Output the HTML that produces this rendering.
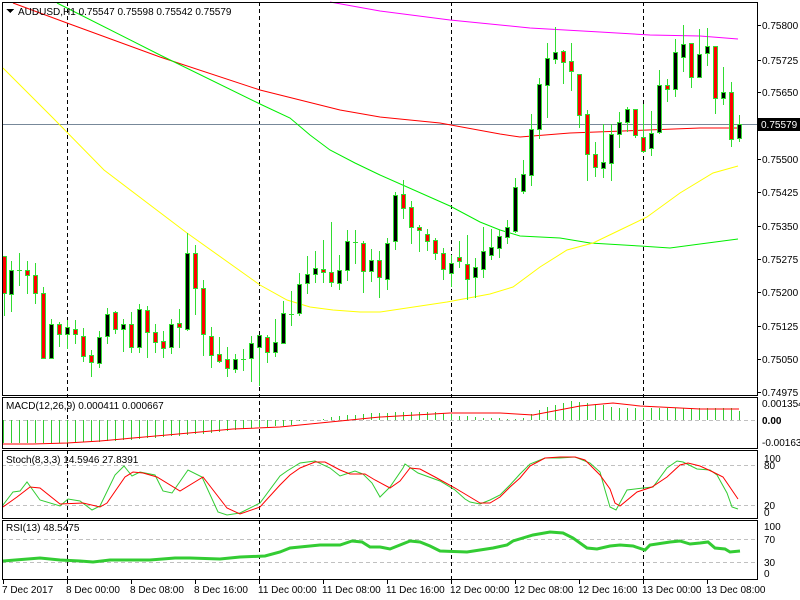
<!DOCTYPE html>
<html><head><meta charset="utf-8"><style>
html,body{margin:0;padding:0;background:#fff;width:800px;height:600px;overflow:hidden}
svg{display:block;font-family:"Liberation Sans",sans-serif;font-size:10px}
</style></head><body>
<svg id="s" width="800" height="600" xmlns="http://www.w3.org/2000/svg" shape-rendering="crispEdges"></svg>
<script>
var S=document.getElementById('s'),h='';
function L(x1,y1,x2,y2,c,w,d){h+='<line x1="'+x1+'" y1="'+y1+'" x2="'+x2+'" y2="'+y2+'" stroke="'+c+'" stroke-width="'+(w||1)+'"'+(d?' stroke-dasharray="'+d+'"':'')+'/>';}
function R(x,y,w,hh,f){h+='<rect x="'+x+'" y="'+y+'" width="'+w+'" height="'+hh+'" fill="'+f+'"/>';}
function T(x,y,t,a,b){h+='<text x="'+x+'" y="'+y+'"'+(a?' text-anchor="'+a+'"':'')+(b?' font-weight="bold"':'')+'>'+t+'</text>';}
function P(pts,c,w){h+='<polyline fill="none" stroke="'+c+'" stroke-width="'+(w||1)+'" shape-rendering="auto" points="'+pts.map(function(p){return p.join(',')}).join(' ')+'"/>';}
function interp(pts,x){for(var i=0;i<pts.length-1;i++){if(x>=pts[i][0]&&x<=pts[i+1][0]){var t=(x-pts[i][0])/(pts[i+1][0]-pts[i][0]);return pts[i][1]+t*(pts[i+1][1]-pts[i][1]);}}return pts[pts.length-1][1];}
var G='#32dd32',GR='#c0c0c0';
L(2,420.5,757,420.5,GR,1,'4,3');
L(2,465.5,757,465.5,GR,1,'4,3');L(2,505.5,757,505.5,GR,1,'4,3');
L(2,539.5,757,539.5,GR,1,'4,3');L(2,562.5,757,562.5,GR,1,'4,3');
[67,259,451,643].forEach(function(x){L(x+.5,2,x+.5,580,'#000',1,'4,3');});
L(2,124.5,757,124.5,'#778899');
P([[330,2],[380,11],[450,20],[530,28],[600,32],[650,35],[700,36],[738,39]],'#ff00ff');
P([[13,3],[67,23],[160,57],[260,90],[300,100],[340,110],[380,117],[440,123],[500,134],[520,137],[570,133],[700,128],[738,128]],'#ff0000');
P([[57,3],[160,55],[260,104],[290,118],[310,135],[330,150],[355,163],[380,175],[450,206],[480,222],[500,230],[520,236],[560,238],[590,243],[640,246],[670,248],[700,244],[738,239]],'#00ee00');
P([[3,68],[53,118],[104,170],[187,233],[260,285],[287,300],[310,307],[333,310],[360,312],[380,312],[447,302],[490,294],[513,287],[540,267],[567,250],[593,243],[620,230],[647,217],[680,193],[713,173],[738,166]],'#ffff00');
var C=[[4,256,293,256,315,0],[11,270,294,261,311,1],[19,270,270,253,285,1],[27,270,275,261,293,0],[35,275,293,263,303,0],[43,293,358,287,358,0],[51,324,358,319,358,1],[59,324,334,322,346,0],[67,327,334,320,348,1],[75,329,334,320,343,0],[83,336,356,328,361,0],[91,355,362,350,376,0],[99,337,363,331,367,1],[107,314,336,308,343,1],[115,312,329,311,333,0],[123,324,329,319,351,1],[131,324,347,312,352,0],[139,309,347,304,352,1],[147,310,332,306,357,0],[155,332,342,324,352,0],[163,341,348,331,357,0],[171,324,347,319,353,1],[179,323,327,309,347,0],[187,253,329,233,330,1],[195,253,288,245,314,0],[203,288,334,280,355,0],[211,336,355,327,367,0],[219,354,361,337,362,0],[227,359,368,347,376,0],[235,359,369,354,372,1],[243,359,359,349,370,1],[251,343,358,336,381,1],[259,335,347,335,385,1],[267,337,352,335,362,0],[275,342,352,319,356,1],[283,313,343,301,343,1],[291,314,314,291,325,1],[299,284,313,273,315,1],[307,274,283,256,293,1],[315,268,274,251,282,1],[323,269,272,240,282,0],[331,272,282,222,286,0],[339,270,283,255,289,1],[347,241,270,230,280,1],[355,242,242,230,263,1],[363,243,271,241,292,0],[371,260,271,249,281,1],[379,260,277,251,297,0],[387,243,279,238,289,1],[395,195,241,192,249,1],[403,194,208,180,218,0],[411,207,227,201,243,0],[419,227,230,225,251,0],[427,234,241,229,250,0],[435,240,253,238,259,0],[443,253,269,248,279,0],[451,263,273,255,286,1],[459,257,261,241,267,0],[467,264,279,235,299,0],[475,267,277,258,297,1],[483,251,269,227,277,1],[491,247,255,229,259,1],[499,236,248,230,257,1],[507,227,237,220,243,1],[515,187,231,178,232,1],[523,174,191,160,193,1],[531,129,175,114,185,1],[539,84,129,78,138,1],[547,58,85,43,117,1],[555,52,59,27,63,1],[563,51,62,50,83,0],[571,61,71,43,90,0],[579,74,115,74,127,0],[587,114,154,110,180,0],[595,154,167,142,176,0],[603,162,168,124,177,1],[611,134,163,124,180,1],[619,122,134,112,147,1],[627,109,122,107,131,1],[635,109,135,109,137,0],[643,137,151,104,152,0],[651,133,148,111,155,1],[659,85,132,70,133,1],[667,85,89,79,101,0],[675,52,89,39,96,1],[683,44,57,25,71,1],[691,43,77,43,87,0],[699,54,77,29,77,1],[707,46,53,28,65,1],[715,46,98,46,113,0],[723,92,98,67,104,1],[731,92,139,82,146,0],[739,124,138,115,141,1]];
C.forEach(function(c){var x=c[0];L(x+.5,c[3],x+.5,c[4]+1,G);
 if(c[2]-c[1]<2){L(x-2,c[1]+.5,x+3,c[1]+.5,G);}else{R(x-2,c[1],5,c[2]-c[1]+1,G);R(x-1,c[1]+1,3,c[2]-c[1]-1,c[5]?'#000':'#ff0000');}});
var mb=[[3,443],[60,443],[100,442],[150,438],[200,434],[250,428],[290,425],[300,421],[320,419],[340,416],[360,414],[400,412],[440,412],[460,416],[490,418],[520,419],[535,412],[550,406],[565,402],[575,401],[600,405],[620,408],[640,408],[730,408],[739,411]];
for(var i=0;i<93;i++){var x=3+8*i,y=Math.round(interp(mb,x));L(x+.5,420,x+.5,y,'#32cc32');}
P([[3,444],[33,444],[67,443],[100,441],[133,438],[167,435],[200,432],[233,429],[280,427],[320,423],[380,417],[450,413],[500,413],[533,415],[580,406],[613,403],[640,406],[700,409],[739,409]],'#ff0000');
P([[3,505],[13,492],[20,491],[27,482],[40,500],[60,506],[68,499],[80,501],[92,510],[100,506],[115,475],[124,466],[132,476],[140,472],[155,475],[163,491],[172,493],[188,470],[202,477],[218,512],[227,515],[240,513],[260,503],[280,476],[287,471],[300,463],[315,461],[330,468],[340,476],[355,471],[363,474],[372,483],[380,497],[390,487],[403,468],[405,464],[418,473],[440,481],[455,490],[465,499],[470,502],[480,504],[490,500],[500,495],[510,485],[520,474],[530,464],[545,458],[560,458],[575,457],[590,463],[600,472],[605,490],[610,507],[616,510],[627,490],[643,488],[653,487],[667,468],[677,461],[683,462],[697,469],[710,470],[717,475],[727,493],[732,507],[738,509]],'#32cc32');
P([[3,507],[17,497],[30,487],[40,488],[60,504],[83,503],[100,507],[107,503],[125,477],[133,472],[143,473],[157,477],[180,491],[203,477],[227,508],[240,514],[260,507],[280,485],[290,475],[300,468],[315,462],[325,462],[340,470],[350,474],[365,474],[375,480],[390,488],[400,481],[410,468],[420,469],[435,477],[455,488],[470,497],[480,503],[490,503],[500,497],[510,487],[520,478],[530,466],[545,458],[560,457],[575,457],[585,460],[600,475],[610,489],[615,503],[620,506],[637,492],[652,487],[667,477],[680,465],[688,463],[700,466],[713,472],[723,477],[738,499]],'#ff0000');
P([[3,561],[40,558],[60,560],[80,561],[93,562],[110,560],[150,560],[175,558],[190,558],[220,559],[240,557],[265,556],[280,552],[290,548],[320,545],[340,545],[352,541],[362,542],[370,547],[380,547],[390,549],[400,545],[410,541],[420,542],[430,546],[440,551],[467,552],[493,548],[507,545],[513,541],[533,535],[550,532],[563,533],[573,538],[587,548],[597,549],[610,546],[620,545],[633,546],[645,550],[650,545],[670,542],[680,541],[690,544],[700,543],[708,542],[715,548],[725,549],[730,552],[740,551]],'#33cc33',3);
function box(y1,y2){h+='<rect x="2.5" y="'+(y1+.5)+'" width="755" height="'+(y2-y1)+'" fill="none" stroke="#000"/>';}
box(2,395);box(397,448);box(450,518);box(520,579);
var pl=[['0.75800',25],['0.75725',60],['0.75650',92],['0.75500',159],['0.75425',192],['0.75350',226],['0.75275',259],['0.75200',292],['0.75125',326],['0.75050',359],['0.74975',392]];
pl.forEach(function(p){L(757,p[1]+.5,761,p[1]+.5,'#000');T(762,p[1]+4,p[0]);});
R(757,118,43,13,'#000');h+='<text x="761" y="128" fill="#fff">0.75579</text>';
T(762,407,'0.001354');T(762,424,'0.00',null,1);T(762,446,'-0.00163');
T(764,462,'100');T(764,469,'80');T(764,509,'20');T(764,516,'0');
T(764,530,'100');T(764,543,'70');T(764,566,'30');T(764,577,'0');
h+='<polygon points="6,9 14,9 10,13" fill="#000"/>';
T(18,15,'AUDUSD,H1  0.75547 0.75598 0.75542 0.75579');
T(6,409,'MACD(12,26,9) 0.000411 0.000667');
T(6,463,'Stoch(8,3,3) 14.5946 27.8391');
T(6,531,'RSI(13) 48.5475');
var d=[['7 Dec 2017',3],['8 Dec 00:00',67],['8 Dec 08:00',131],['8 Dec 16:00',195],['11 Dec 00:00',259],['11 Dec 08:00',323],['11 Dec 16:00',387],['12 Dec 00:00',451],['12 Dec 08:00',515],['12 Dec 16:00',579],['13 Dec 00:00',643],['13 Dec 08:00',707]];
d.forEach(function(p){L(p[1]+.5,579,p[1]+.5,584,'#000');T(p[1]-1,593,p[0]);});
S.innerHTML=h;
</script>
</body></html>
